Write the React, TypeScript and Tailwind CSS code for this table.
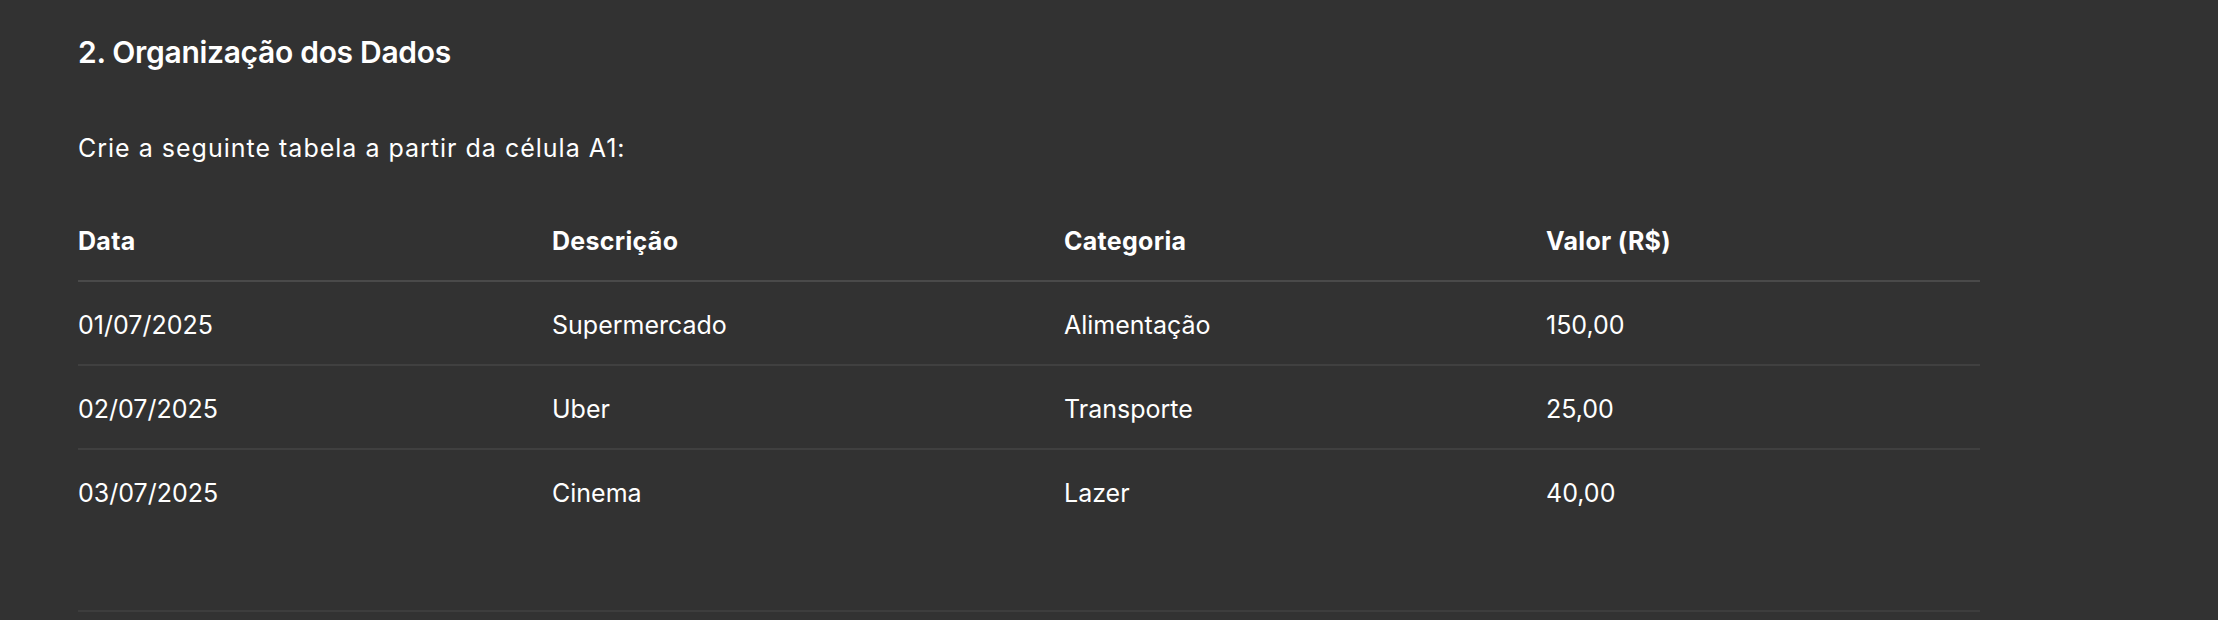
import React from 'react';

const rows = [
  { data: '01/07/2025', desc: 'Supermercado', cat: 'Alimentação', valor: '150,00' },
  { data: '02/07/2025', desc: 'Uber', cat: 'Transporte', valor: '25,00' },
  { data: '03/07/2025', desc: 'Cinema', cat: 'Lazer', valor: '40,00' },
];

const App: React.FC = () => {
  return (
    <div className="min-h-screen w-full bg-[#323232] text-white font-['Inter','Noto_Sans',sans-serif]">
      <div className="pl-[78px] pt-[34px] w-[1980px]">
        {/* Section title */}
        <h2 className="text-[30px] leading-[36px] font-semibold tracking-[-0.3px]">2. Organização dos Dados</h2>

        <p className="mt-[62px] text-[25px] leading-[32px] tracking-[1px]">Crie a seguinte tabela a partir da célula A1:</p>

        {/* Table */}
        <table className="mt-[38px] w-[1902px] table-fixed border-collapse text-[25px] leading-[32px]">
          <colgroup>
            <col className="w-[474px]" />
            <col className="w-[512px]" />
            <col className="w-[482px]" />
            <col />
          </colgroup>
          <thead>
            <tr className="border-b-2 border-[#4a4a4a]">
              <th className="text-left font-bold tracking-[0.3px] pt-[23px] pb-[23px]">Data</th>
              <th className="text-left font-bold tracking-[0.3px] pt-[23px] pb-[23px]">Descrição</th>
              <th className="text-left font-bold tracking-[0.3px] pt-[23px] pb-[23px]">Categoria</th>
              <th className="text-left font-bold tracking-[0.3px] pt-[23px] pb-[23px]">Valor (R$)</th>
            </tr>
          </thead>
          <tbody>
            {rows.map((r, i) => (
              <tr key={r.data} className={i < rows.length - 1 ? 'border-b-2 border-[#404040]' : ''}>
                <td className="pt-[27px] pb-[23px]">{r.data}</td>
                <td className="pt-[27px] pb-[23px]">{r.desc}</td>
                <td className="pt-[27px] pb-[23px]">{r.cat}</td>
                <td className="pt-[27px] pb-[23px]">{r.valor}</td>
              </tr>
            ))}
          </tbody>
        </table>

        <hr className="mt-[78px] border-0 h-[2px] bg-[#3d3d3d]" />
      </div>
    </div>
  );
};

export default App;
